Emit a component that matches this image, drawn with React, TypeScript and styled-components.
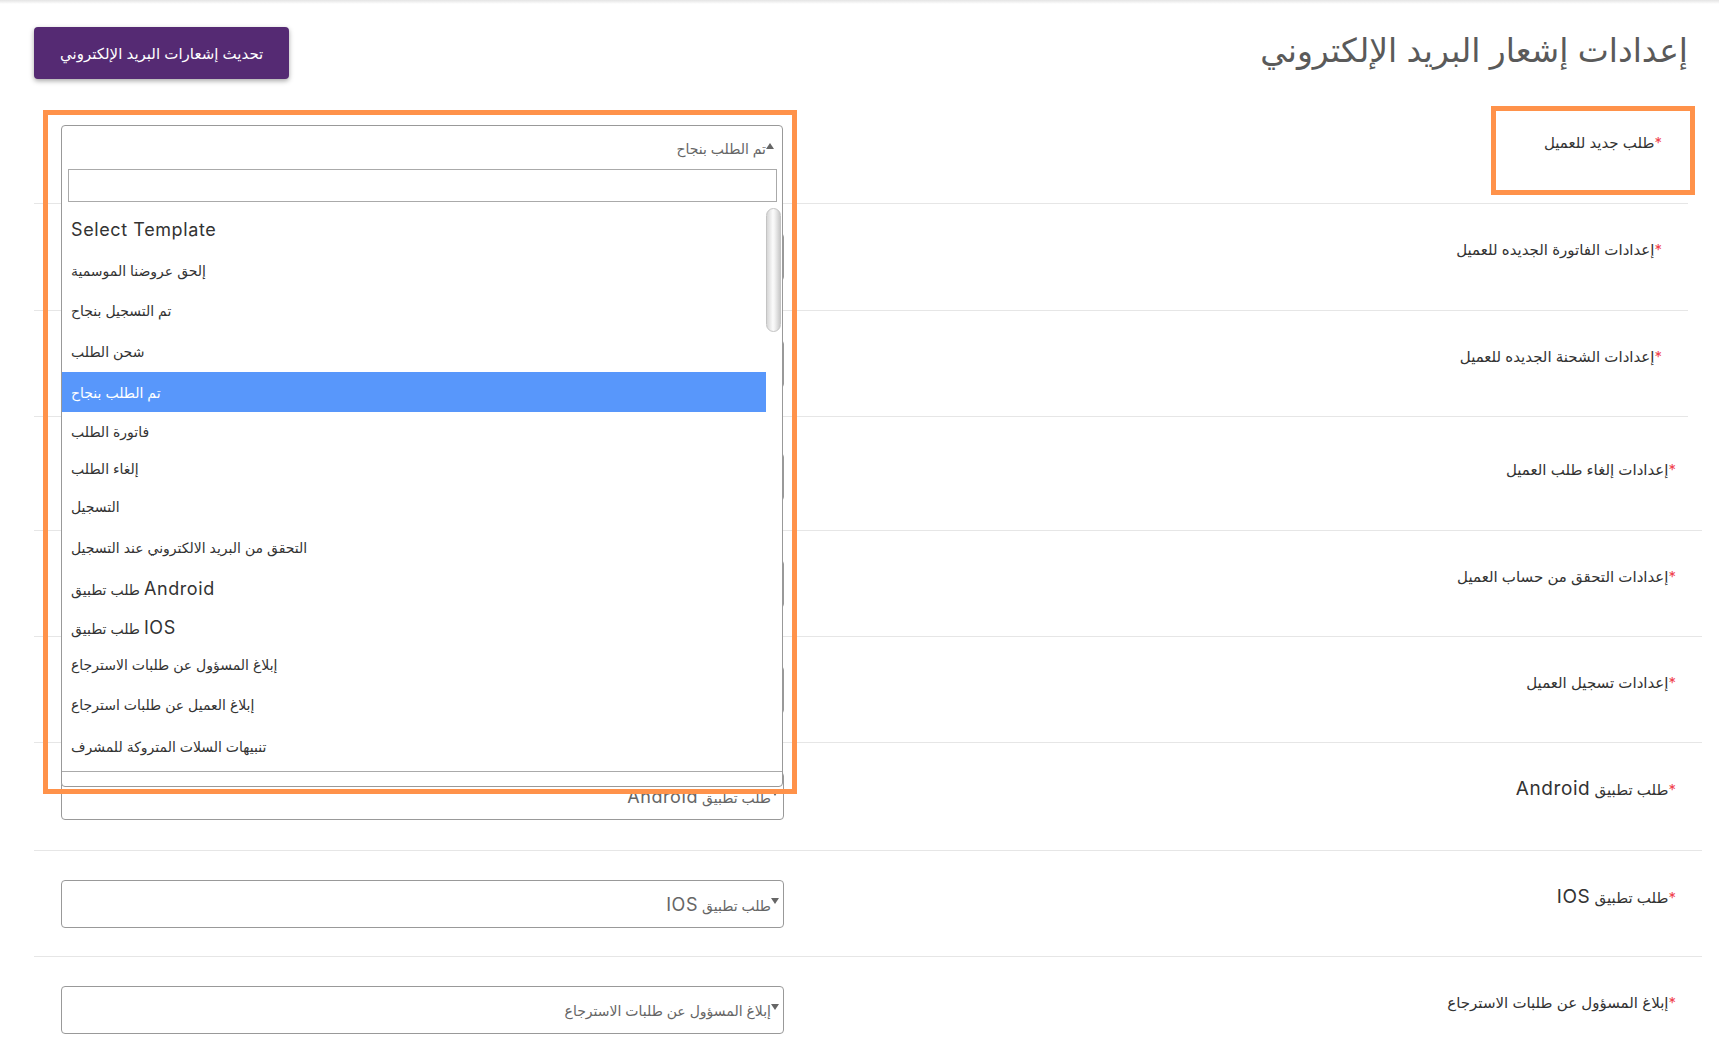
import styled, { createGlobalStyle } from "styled-components";

const GlobalStyle = createGlobalStyle`
  html, body {
    margin: 0;
    padding: 0;
    background: #fff;
  }
  body {
    font-family: Inter, "DejaVu Sans", sans-serif;
  }
  * {
    box-sizing: border-box;
  }
`;

const Page = styled.div`
  direction: rtl;
  height: 1056px;
  overflow: hidden;
  padding: 0 31px 0 34px;
  background: linear-gradient(#e4e4e4, #fff 4px) no-repeat;
`;

const Header = styled.header`
  display: flex;
  justify-content: space-between;
  align-items: flex-start;
  height: 97px;
  padding-top: 27px;
`;

const Title = styled.h1`
  margin: 0;
  font-size: 33px;
  line-height: 46px;
  font-weight: 400;
  color: #5a5a5a;
`;

const UpdateButton = styled.button`
  height: 52px;
  padding: 0 26px;
  border: 0;
  border-radius: 4px;
  background: #552a73;
  color: #fff;
  font-family: inherit;
  font-size: 15px;
  font-weight: 400;
  box-shadow: 0 2px 5px rgba(0, 0, 0, 0.35);
  cursor: pointer;
`;

const Row = styled.div<{ $wide?: boolean; $top?: number; $bottom?: number }>`
  position: relative;
  display: flex;
  align-items: flex-start;
  padding: ${(p) => p.$top ?? 29}px 0 ${(p) => p.$bottom ?? 28}px;
  margin-right: ${(p) => (p.$wide ? -14 : 0)}px;
  border-bottom: 1px solid #e6e6e6;
`;

const LabelCell = styled.div`
  flex: 1;
  padding: 6px 26px 0 0;
  font-size: 15px;
  line-height: 22px;
  color: #333;
`;

const Star = styled.span`
  color: #f0434f;
`;

const Latin = styled.span<{ $size?: number }>`
  font-family: Inter, sans-serif;
  font-size: ${(p) => p.$size ?? 18}px;
  letter-spacing: 0.6px;
`;

const SelectCell = styled.div`
  width: 750px;
  padding-left: 27px;
`;

const SelectBox = styled.div`
  height: 48px;
  display: flex;
  align-items: center;
  padding-right: 4px;
  border: 1px solid #999;
  border-radius: 4px;
  color: #666;
  font-size: 14px;
`;

const Caret = styled.span<{ $up?: boolean }>`
  flex: none;
  width: 0;
  height: 0;
  margin-top: ${(p) => (p.$up ? -6 : -7)}px;
  border-left: 4px solid transparent;
  border-right: 4px solid transparent;
  ${(p) =>
    p.$up ? "border-bottom: 6px solid #666;" : "border-top: 6px solid #666;"}
`;

const SelectAnchor = styled.div`
  position: relative;
  height: 48px;
`;

const Dropdown = styled.div`
  position: absolute;
  top: -1px;
  left: 0;
  right: 1px;
  z-index: 5;
  height: 662px;
  background: #fff;
  border: 1px solid #999;
  border-radius: 4px;
`;

const DropHead = styled.div`
  height: 39px;
  display: flex;
  align-items: center;
  padding: 6px 8px 0 0;
  color: #666;
  font-size: 14px;
`;

const SearchWrap = styled.div`
  padding: 4px 5px 0 6px;
`;

const SearchInput = styled.input`
  display: block;
  width: 100%;
  height: 33px;
  border: 1px solid #aaa;
  outline: none;
  background: #fff;
`;

const Results = styled.div`
  direction: ltr;
  display: flex;
  height: 564px;
  margin-top: 6px;
  border-bottom: 1px solid #aaa;
  overflow: hidden;
`;

const Options = styled.ul`
  flex: 1;
  list-style: none;
  margin: 0;
  padding: 0;
`;

const Option = styled.li<{ $h: number; $active?: boolean }>`
  display: flex;
  align-items: center;
  height: ${(p) => p.$h}px;
  padding-left: 9px;
  font-size: 14px;
  color: ${(p) => (p.$active ? "#fff" : "#333")};
  background: ${(p) => (p.$active ? "#5897fb" : "transparent")};
`;

const Track = styled.div`
  width: 16px;
  padding-right: 1px;
`;

const Thumb = styled.div`
  height: 124px;
  border: 1px solid #c4c4c4;
  border-radius: 8px;
  background: linear-gradient(to right, #d6d6d6, #fbfbfb 45%, #f2f2f2 60%, #c9c9c9);
`;

const Highlight = styled.div<{ $top: number; $left?: number; $right?: number; $w: number; $h: number }>`
  position: absolute;
  top: ${(p) => p.$top}px;
  ${(p) => (p.$left !== undefined ? `left: ${p.$left}px;` : "")}
  ${(p) => (p.$right !== undefined ? `right: ${p.$right}px;` : "")}
  width: ${(p) => p.$w}px;
  height: ${(p) => p.$h}px;
  z-index: 6;
  border: 5px solid #ff924a;
  pointer-events: none;
`;

type Item = { text: React.ReactNode; h: number; active?: boolean };

const items: Item[] = [
  { text: <Latin>Select Template</Latin>, h: 42 },
  { text: "إلحق عروضنا الموسمية", h: 40 },
  { text: "تم التسجيل بنجاح", h: 40 },
  { text: "شحن الطلب", h: 42 },
  { text: "تم الطلب بنجاح", h: 40, active: true },
  { text: "فاتورة الطلب", h: 38 },
  { text: "إلغاء الطلب", h: 36 },
  { text: "التسجيل", h: 41 },
  { text: "التحقق من البريد الالكتروني عند التسجيل", h: 40 },
  { text: <>طلب تطبيق <Latin>Android</Latin></>, h: 43 },
  { text: <>طلب تطبيق <Latin>IOS</Latin></>, h: 34 },
  { text: "إبلاغ المسؤول عن طلبات الاسترجاع", h: 40 },
  { text: "إبلاغ العميل عن طلبات استرجاع", h: 41 },
  { text: "تنبيهات السلات المتروكة للمشرف", h: 42 },
];

type Setting = {
  label: React.ReactNode;
  value: React.ReactNode;
  wide?: boolean;
  top?: number;
  bottom?: number;
};

const settings: Setting[] = [
  { label: "إعدادات الفاتورة الجديده للعميل", value: "فاتورة الطلب", bottom: 29 },
  { label: "إعدادات الشحنة الجديده للعميل", value: "شحن الطلب" },
  { label: "إعدادات إلغاء طلب العميل", value: "إلغاء الطلب", wide: true, top: 36, bottom: 29 },
  { label: "إعدادات التحقق من حساب العميل", value: "التحقق من البريد الالكتروني عند التسجيل", wide: true },
  { label: "إعدادات تسجيل العميل", value: "التسجيل", wide: true },
  {
    label: <>طلب تطبيق <Latin $size={19}>Android</Latin></>,
    value: <>طلب تطبيق <Latin>Android</Latin></>,
    wide: true,
    bottom: 30,
  },
  {
    label: <>طلب تطبيق <Latin $size={19}>IOS</Latin></>,
    value: <>طلب تطبيق <Latin>IOS</Latin></>,
    wide: true,
  },
  { label: "إبلاغ المسؤول عن طلبات الاسترجاع", value: "إبلاغ المسؤول عن طلبات الاسترجاع", wide: true },
];

const App = () => {
  return (
    <>
      <GlobalStyle />
      <Page>
        <Header>
          <Title>إعدادات إشعار البريد الإلكتروني</Title>
          <UpdateButton>تحديث إشعارات البريد الإلكتروني</UpdateButton>
        </Header>

        <Row $bottom={29}>
          <LabelCell>
            <Star>*</Star>طلب جديد للعميل
          </LabelCell>
          <SelectCell>
            <SelectAnchor>
              <Dropdown>
                <DropHead>
                  <Caret $up />
                  <span>تم الطلب بنجاح</span>
                </DropHead>
                <SearchWrap>
                  <SearchInput />
                </SearchWrap>
                <Results>
                  <Options>
                    {items.map((it, i) => (
                      <Option key={i} $h={it.h} $active={it.active}>
                        <span>{it.text}</span>
                      </Option>
                    ))}
                  </Options>
                  <Track>
                    <Thumb />
                  </Track>
                </Results>
              </Dropdown>
            </SelectAnchor>
          </SelectCell>
          <Highlight $top={9} $right={-7} $w={204} $h={89} />
          <Highlight $top={13} $left={9} $w={754} $h={684} />
        </Row>

        {settings.map((s, i) => (
          <Row key={i} $wide={s.wide} $top={s.top} $bottom={s.bottom}>
            <LabelCell>
              <Star>*</Star>
              {s.label}
            </LabelCell>
            <SelectCell>
              <SelectBox>
                <Caret />
                <span>{s.value}</span>
              </SelectBox>
            </SelectCell>
          </Row>
        ))}
      </Page>
    </>
  );
};

export default App;
